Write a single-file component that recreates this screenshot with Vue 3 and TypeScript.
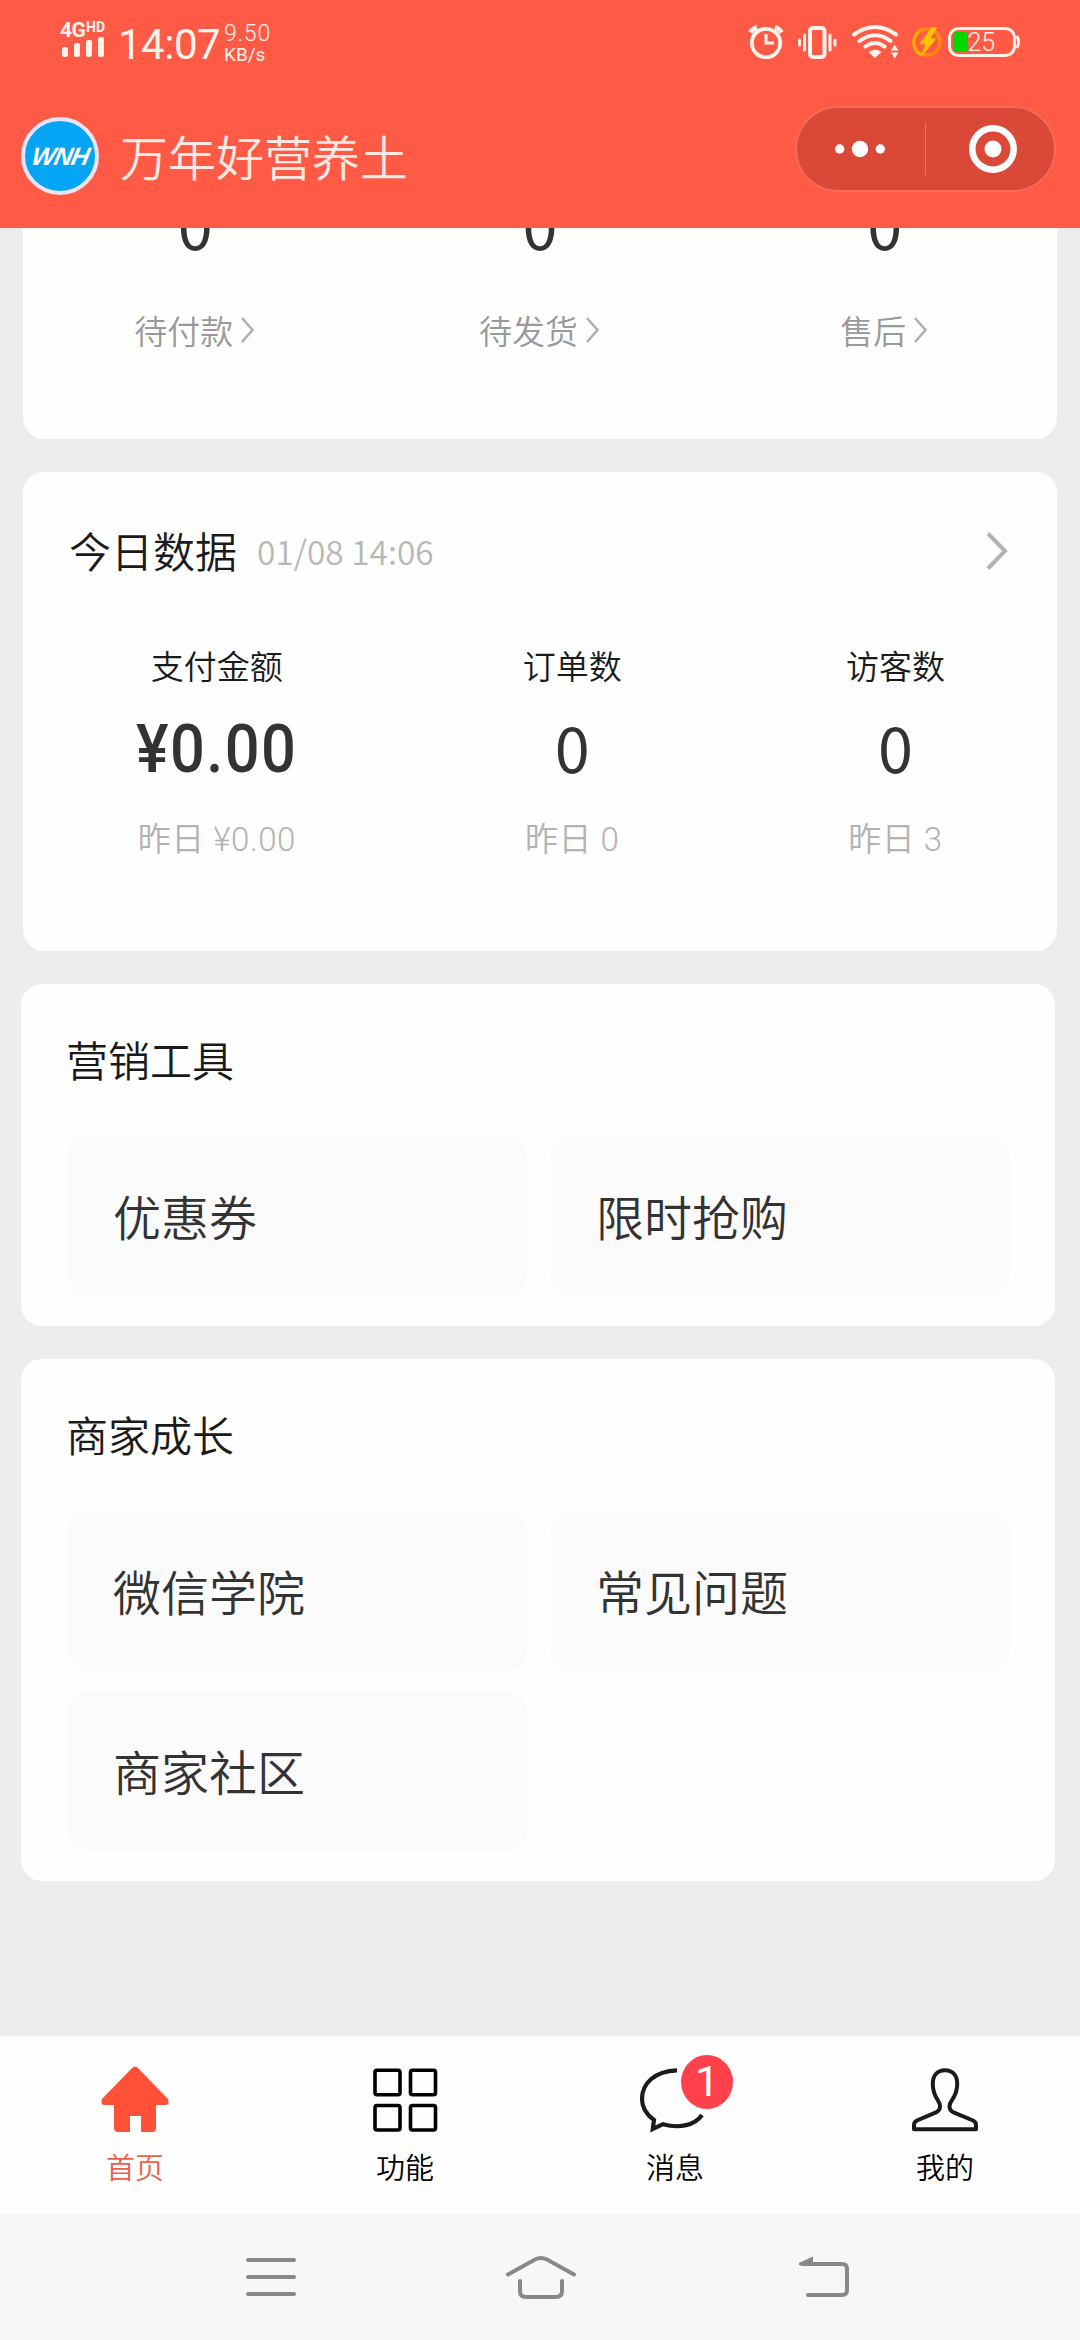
<script setup lang="ts">
interface Stat {
  label: string
  value: string
  yesterday: string
  strong?: boolean
}

interface ToolGroup {
  title: string
  items: string[]
}

const orders: string[] = ['待付款', '待发货', '售后']

const stats: Stat[] = [
  { label: '支付金额', value: '¥0.00', yesterday: '昨日 ¥0.00', strong: true },
  { label: '订单数', value: '0', yesterday: '昨日 0' },
  { label: '访客数', value: '0', yesterday: '昨日 3' },
]

const groups: ToolGroup[] = [
  { title: '营销工具', items: ['优惠券', '限时抢购'] },
  { title: '商家成长', items: ['微信学院', '常见问题', '商家社区'] },
]
</script>

<template>
  <div class="screen">
    <header class="header">
      <div class="status">
        <div class="network">
          <div class="net-type"><span class="g4">4G</span><span class="hd">HD</span></div>
          <svg class="bars" width="44" height="20" viewBox="0 0 44 20" fill="#fff3ec">
            <rect x="1" y="10" width="6" height="10" rx="2" />
            <rect x="13" y="6" width="6" height="14" rx="2" />
            <rect x="25" y="3" width="6" height="17" rx="2" />
            <rect x="37" y="0" width="6" height="20" rx="2" />
          </svg>
        </div>
        <div class="clock">14:07</div>
        <div class="speed"><span>9.50</span><span class="unit">KB/s</span></div>
        <svg class="status-icons" width="276" height="40" viewBox="746 22 276 40" fill="none" stroke="#fff3ec">
          <circle cx="766" cy="43" r="14.2" stroke-width="3.8" />
          <path d="M766 34v9h8" stroke-width="3" />
          <path d="M750.5 32.500a12 12 0 0 1 6.500-5.200M781.500 32.500a12 12 0 0 0-6.500-5.200" stroke-width="4.600" />
          <rect x="810" y="28" width="14.500" height="29" rx="3" stroke-width="4" />
          <path d="M804.500 35v15M830 35v15M799.500 40v5M835 40v5" stroke-width="3" stroke-linecap="round" />
          <path d="M854 34.500Q875 19.500 896 34.500M859.500 41Q875 29.500 890.500 41M865.500 46.500Q875 39.500 884.500 46.500" stroke-width="4" stroke-linecap="round" />
          <path d="M868.500 52Q875 47 881.500 52L875 58Z" fill="#fff3ec" stroke="none" />
          <path d="M891 50.500l3.700-6 3.700 6zM891 52.500l3.700 6 3.700-6z" fill="#fff3ec" stroke="none" />
          <circle cx="927" cy="42" r="13" stroke="#ff8a10" stroke-width="3.500" />
          <path d="M932 28l-11.500 15.500h6l-4.500 11.500 13-16h-6l7-11z" fill="#ffc400" stroke="#ffc400" stroke-width="1.500" />
          <path d="M921 30q-8 5-7.500 14 1.500 10 9 11" stroke="#ffb000" stroke-width="2.500" />
          <rect x="949.500" y="28.500" width="65" height="27" rx="9" stroke-width="3" />
          <path d="M1017 36q3 6 0 12" stroke-width="3" />
          <rect x="953" y="32" width="15" height="20" rx="4" fill="#00d800" stroke="none" />
          <text x="967.500" y="50.500" class="battery-text">25</text>
        </svg>
      </div>
      <div class="titlebar">
        <div class="avatar"><span>WNH</span></div>
        <h1>万年好营养土</h1>
        <div class="capsule">
          <svg width="50" height="18" viewBox="0 0 50 18" fill="#fff">
            <circle cx="4.700" cy="9" r="4.700" /><circle cx="25" cy="9" r="8.200" /><circle cx="45.300" cy="9" r="4.700" />
          </svg>
          <i></i>
          <svg width="50" height="50" viewBox="0 0 50 50">
            <circle cx="25" cy="25" r="20.700" fill="none" stroke="#fff" stroke-width="6.500" />
            <circle cx="25" cy="25" r="8.500" fill="#fff" />
          </svg>
        </div>
      </div>
    </header>

    <main class="content">
      <section class="card orders">
        <div v-for="o in orders" :key="o" class="order">
          <b class="num">0</b>
          <div class="order-label">
            <span>{{ o }}</span>
            <svg width="15" height="28" viewBox="0 0 15 28" fill="none" stroke="#b0b0b0" stroke-width="2.600">
              <path d="M2 2l10.500 12L2 26" />
            </svg>
          </div>
        </div>
      </section>

      <section class="card today">
        <div class="today-head">
          <h2>今日数据</h2>
          <time>01/08 14:06</time>
          <svg width="24" height="40" viewBox="0 0 24 40" fill="none" stroke="#b2b2b2" stroke-width="4">
            <path d="M3 2.500L20 20 3 37.500" />
          </svg>
        </div>
        <div class="stats">
          <div v-for="s in stats" :key="s.label" class="stat">
            <span class="stat-label">{{ s.label }}</span>
            <b class="num" :class="{ strong: s.strong }">{{ s.value }}</b>
            <span class="stat-sub">{{ s.yesterday }}</span>
          </div>
        </div>
      </section>

      <section v-for="g in groups" :key="g.title" class="card group">
        <h2>{{ g.title }}</h2>
        <div class="tiles">
          <div v-for="t in g.items" :key="t" class="tile">{{ t }}</div>
        </div>
      </section>
    </main>

    <nav class="tabs">
      <a class="tab active">
        <svg width="72" height="72" viewBox="99 2064 72 72" fill="#ff5138">
          <path d="M132 2068q3-3 6 0l30 31q2 6-3 6h-9v23q0 4-4 4h-11v-16h-11v16h-12q-4 0-4-4v-23h-9q-5 0-3-6z" />
        </svg>
        <span>首页</span>
      </a>
      <a class="tab">
        <svg width="72" height="72" viewBox="369 2064 72 72" fill="none" stroke="#000" stroke-width="3.600">
          <rect x="375" y="2070.200" width="25" height="24.500" rx="2" /><rect x="410.500" y="2070.200" width="25" height="24.500" rx="2" />
          <rect x="375" y="2105.500" width="25" height="24.500" rx="2" /><rect x="410.500" y="2105.500" width="25" height="24.500" rx="2" />
        </svg>
        <span>功能</span>
      </a>
      <a class="tab">
        <svg width="72" height="72" viewBox="639 2064 72 72" fill="none" stroke="#1a1a1a" stroke-width="4.200">
          <path d="M677 2070.300C654 2071 642 2084 642 2099C642 2108 647 2115 654 2120L652.800 2129L663 2124.200C680 2129 695 2125 702 2115" />
        </svg>
        <span>消息</span>
        <em class="badge">1</em>
      </a>
      <a class="tab">
        <svg width="72" height="72" viewBox="909 2064 72 72" fill="none" stroke="#1a1a1a" stroke-width="4" stroke-linejoin="round">
          <path d="M945 2070.300C937 2070.300 932.800 2076 932.800 2084C932.800 2098 940 2100 940 2106C940 2109.500 939 2111 936 2112.300L917 2120.500Q914 2122 914 2125V2129.300H976V2125Q976 2122 973 2120.500L953.500 2112.300C950.500 2111 949.500 2109.500 949.500 2106C949.500 2100 957.200 2098 957.200 2084C957.200 2076 953 2070.300 945 2070.300Z" />
        </svg>
        <span>我的</span>
      </a>
    </nav>

    <footer class="sysbar">
      <svg width="52" height="44" viewBox="245 2255 52 44" fill="none" stroke="#888" stroke-width="4" stroke-linecap="round">
        <path d="M248 2260h46M248 2277h46M248 2294h46" />
      </svg>
      <svg class="sys-home" width="76" height="44" viewBox="503 2254 76 44" fill="none" stroke="#888" stroke-width="4" stroke-linecap="round">
        <path d="M508 2273.500L535 2258.500Q541 2255.500 547 2258.500L574 2273.500M520 2280v10q0 6 6 6h30q6 0 6-6v-10" />
      </svg>
      <svg width="52" height="44" viewBox="797 2254 52 44" fill="none" stroke="#888" stroke-width="4" stroke-linecap="round">
        <path d="M802 2263h40q5 0 5 5v21q0 5-5 5h-34" />
        <path d="M799 2262L813 2255.500V2264H799Z" fill="#888" stroke="none" />
      </svg>
    </footer>
  </div>
</template>

<style>
body {
  margin: 0;
  background: #ededed;
}
</style>

<style scoped>
.screen {
  width: 1080px;
  height: 2340px;
  display: flex;
  flex-direction: column;
  overflow: hidden;
  background: #ededed;
  font-family: "Noto Sans CJK SC", sans-serif;
  font-weight: 350;
  color: #1a1a1a;
}
h1, h2 {
  margin: 0;
  font-weight: 350;
}
.header {
  box-sizing: border-box;
  height: 228px;
  flex: none;
  background: #ff5a46;
  color: #fff3ec;
}
.status {
  height: 82px;
  display: flex;
  align-items: flex-start;
  padding: 0 58px 0 60px;
  font-family: Roboto, sans-serif;
}
.network {
  width: 58px;
  padding-top: 20px;
}
.net-type {
  display: flex;
  height: 17px;
  line-height: 20px;
  font-weight: 700;
}
.g4 {
  font-size: 21px;
  width: 26px;
  letter-spacing: -0.500px;
}
.hd {
  font-size: 14px;
  line-height: 15px;
}
.bars {
  display: block;
  margin-left: 1px;
}
.clock {
  width: 106px;
  padding-top: 20px;
  font-size: 42px;
  line-height: 50px;
  font-weight: 400;
  letter-spacing: -0.500px;
}
.speed {
  display: flex;
  flex-direction: column;
  padding-top: 22px;
  font-size: 23px;
  line-height: 24px;
  font-weight: 350;
  letter-spacing: 0.800px;
}
.unit {
  font-size: 19px;
  line-height: 17px;
  font-weight: 400;
  letter-spacing: 0;
}
.status-icons {
  margin: 22px 0 0 auto;
}
.battery-text {
  font: 350 25px Roboto, sans-serif;
  fill: #fff3ec;
  stroke: none;
}
.titlebar {
  display: flex;
  align-items: center;
  padding: 0 24px 0 21px;
  height: 148px;
}
.avatar {
  box-sizing: border-box;
  width: 78px;
  height: 78px;
  border: 4px solid #e9e4f7;
  border-radius: 50%;
  background: #03a5f4;
  display: flex;
  align-items: center;
  justify-content: center;
  font: italic 700 25px "Liberation Sans", sans-serif;
  letter-spacing: -1px;
  color: #fff;
}
.avatar span {
  transform: skewX(-12deg);
}
.titlebar h1 {
  margin: -2px 0 0 21px;
  font-size: 48px;
  line-height: 60px;
  color: #ffe9e2;
}
.capsule {
  box-sizing: border-box;
  width: 261px;
  height: 86px;
  margin: -14px 0 0 auto;
  border: 2px solid #f36b5b;
  border-radius: 43px;
  background: #da4837;
  display: flex;
  align-items: center;
  padding: 0 36px 0 38px;
}
.capsule i {
  width: 1px;
  height: 52px;
  margin: 0 42px 0 40px;
  background: #ee7566;
}
.content {
  height: 1808px;
  flex: none;
  overflow: hidden;
}
.card {
  box-sizing: border-box;
  width: 1034px;
  margin: 0 0 33px 23px;
  border-radius: 21px;
  background: #fefefe;
}
.num {
  font-size: 63px;
  line-height: 70px;
  font-weight: 400;
  color: #333;
}
.orders {
  height: 211px;
  border-radius: 0 0 21px 21px;
  display: flex;
}
.order {
  flex: 1;
  display: flex;
  flex-direction: column;
  align-items: center;
}
.order .num {
  display: flex;
  align-items: flex-end;
  height: 30px;
  overflow: hidden;
}
.order-label {
  display: flex;
  align-items: center;
  gap: 7px;
  margin: 48px 1px 0 0;
  font-size: 33px;
  line-height: 48px;
  color: #999;
}
.today {
  height: 479px;
}
.today-head {
  display: flex;
  align-items: center;
  padding: 48px 48px 0 46px;
}
h2 {
  font-size: 42px;
  line-height: 60px;
}
.today-head time {
  margin-left: 20px;
  font-size: 33.500px;
  line-height: 59px;
  color: #b8b8b8;
}
.today-head svg {
  margin: 2px 0 0 auto;
}
.stats {
  display: flex;
  justify-content: space-around;
  margin-top: 61px;
}
.stat {
  display: flex;
  flex-direction: column;
  align-items: center;
}
.stat-label {
  font-size: 33px;
  line-height: 48px;
}
.stat .num {
  margin: 22px 0 35px;
}
.stat .strong {
  margin: 26px -5px 31px;
  font-family: Roboto, sans-serif;
  font-size: 66px;
  font-weight: 500;
  letter-spacing: 1.500px;
  transform: scaleX(0.93);
}
.stat-sub {
  font-family: Roboto, "Noto Sans CJK SC", sans-serif;
  font-size: 33px;
  line-height: 48px;
  letter-spacing: 0.500px;
  color: #b2b2b2;
}
.group {
  margin-left: 21px;
  padding: 45px 46px 30px 47px;
}
.group h2 {
  margin-left: -2px;
}
.tiles {
  display: grid;
  grid-template-columns: 459px 459px;
  gap: 20px 24px;
  margin-top: 47px;
}
.tile {
  height: 160px;
  padding-left: 45px;
  border-radius: 20px;
  background: #fbfbfb;
  font-size: 48px;
  line-height: 159px;
  box-sizing: border-box;
  color: #333;
}
.tabs {
  height: 178px;
  flex: none;
  display: flex;
  background: #fefefe;
}
.tab {
  flex: 1;
  position: relative;
  display: flex;
  flex-direction: column;
  align-items: center;
  padding-top: 28px;
  font-size: 29px;
  line-height: 40px;
  color: #000;
}
.tab span {
  margin-top: 10px;
}
.tab.active {
  color: #ee5f4e;
}
.badge {
  position: absolute;
  left: 141px;
  top: 19px;
  width: 52px;
  height: 54px;
  border-radius: 50%;
  background: #ff414c;
  box-shadow: 0 0 0 4px #fefefe;
  color: #fff;
  font: 400 43px/52px Roboto, sans-serif;
  text-align: center;
}
.sysbar {
  flex: 1;
  display: flex;
  align-items: center;
  justify-content: space-between;
  padding: 0 231px 1px 245px;
  background: #f7f7f7;
}
.sys-home {
  margin: 0 6px 0 -6px;
}
</style>
